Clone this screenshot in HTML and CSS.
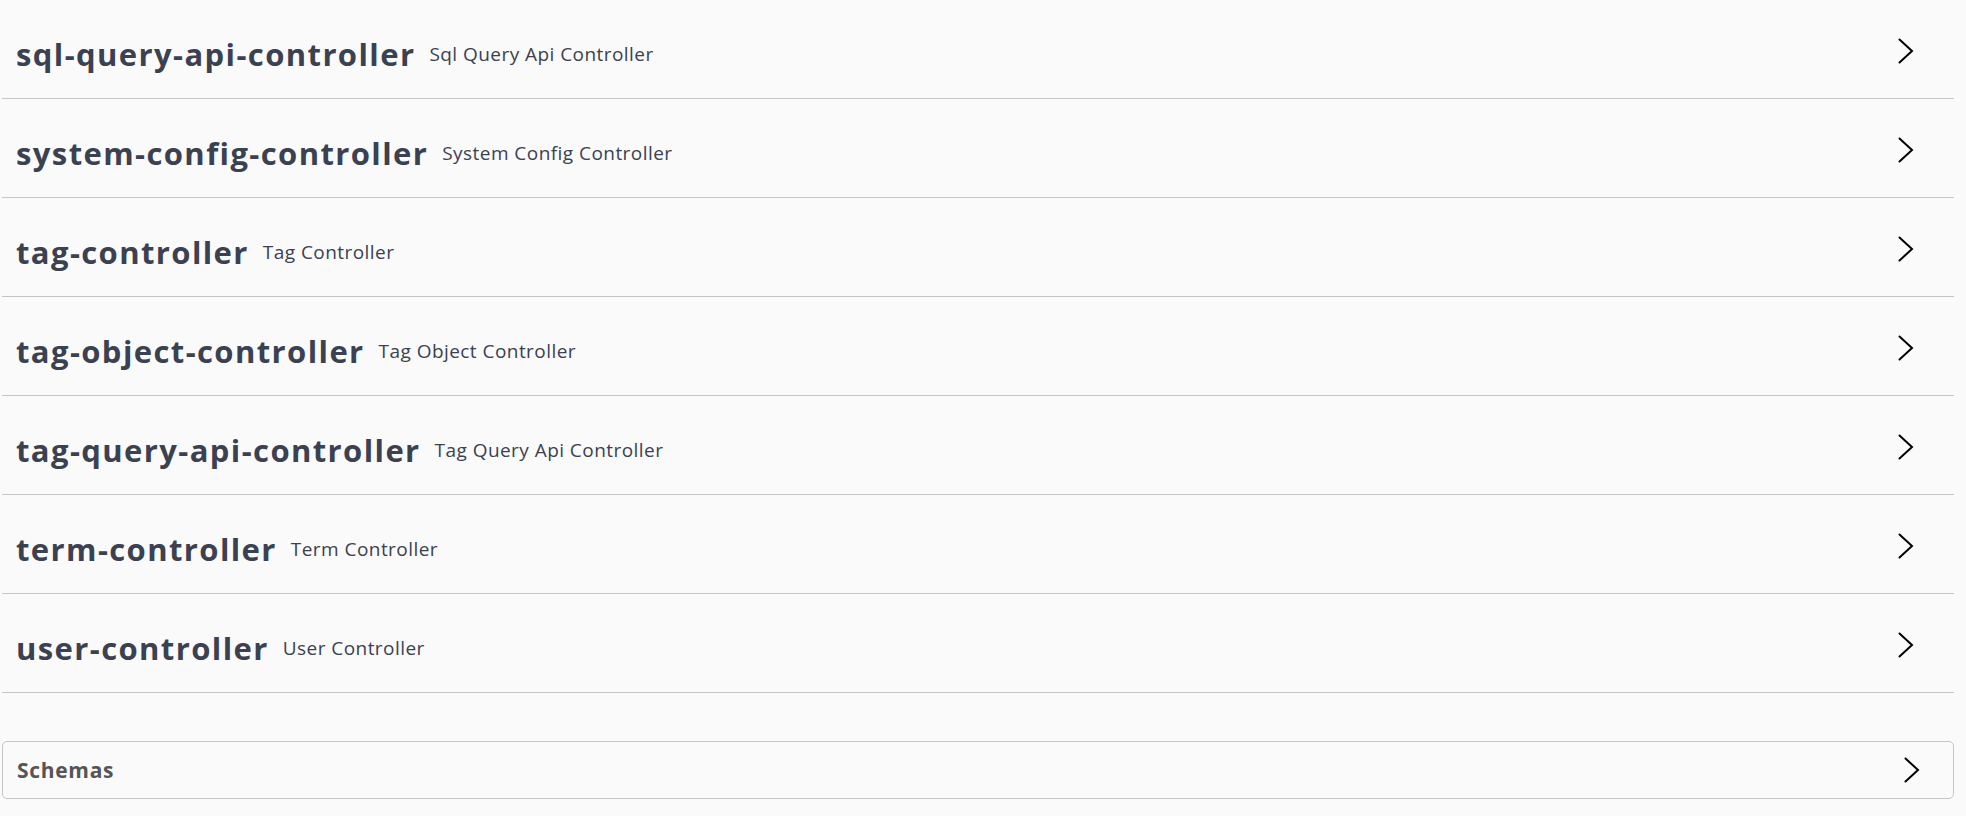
FILE: index.html
```html
<!DOCTYPE html>
<html>
<head>
<meta charset="utf-8">
<link rel="stylesheet" href="styles.css">
</head>
<body>
<div class="page">
  <div class="tags">
    <section class="tag"><h3 class="tag-head"><span class="tag-name">sql-query-api-controller</span><small class="tag-desc">Sql Query Api Controller</small><button class="expand"><svg viewBox="0 0 16 26" width="16" height="26"><polyline points="1.5,1.5 14,13 1.5,24.5"/></svg></button></h3></section>
    <section class="tag"><h3 class="tag-head"><span class="tag-name">system-config-controller</span><small class="tag-desc">System Config Controller</small><button class="expand"><svg viewBox="0 0 16 26" width="16" height="26"><polyline points="1.5,1.5 14,13 1.5,24.5"/></svg></button></h3></section>
    <section class="tag"><h3 class="tag-head"><span class="tag-name">tag-controller</span><small class="tag-desc">Tag Controller</small><button class="expand"><svg viewBox="0 0 16 26" width="16" height="26"><polyline points="1.5,1.5 14,13 1.5,24.5"/></svg></button></h3></section>
    <section class="tag"><h3 class="tag-head"><span class="tag-name">tag-object-controller</span><small class="tag-desc">Tag Object Controller</small><button class="expand"><svg viewBox="0 0 16 26" width="16" height="26"><polyline points="1.5,1.5 14,13 1.5,24.5"/></svg></button></h3></section>
    <section class="tag"><h3 class="tag-head"><span class="tag-name">tag-query-api-controller</span><small class="tag-desc">Tag Query Api Controller</small><button class="expand"><svg viewBox="0 0 16 26" width="16" height="26"><polyline points="1.5,1.5 14,13 1.5,24.5"/></svg></button></h3></section>
    <section class="tag"><h3 class="tag-head"><span class="tag-name">term-controller</span><small class="tag-desc">Term Controller</small><button class="expand"><svg viewBox="0 0 16 26" width="16" height="26"><polyline points="1.5,1.5 14,13 1.5,24.5"/></svg></button></h3></section>
    <section class="tag"><h3 class="tag-head"><span class="tag-name">user-controller</span><small class="tag-desc">User Controller</small><button class="expand"><svg viewBox="0 0 16 26" width="16" height="26"><polyline points="1.5,1.5 14,13 1.5,24.5"/></svg></button></h3></section>
  </div>
  <section class="models">
    <h4 class="models-head"><span>Schemas</span><svg viewBox="0 0 16 26" width="16" height="26"><polyline points="1.5,1.5 14,13 1.5,24.5"/></svg></h4>
  </section>
</div>
</body>
</html>
```
FILE: styles.css
```css
html, body {
  margin: 0;
  padding: 0;
  background: #fafafa;
}
body {
  font-family: "Open Sans", "Noto Sans", sans-serif;
  color: #3b4151;
}
.page {
  margin: 0 12px 0 2px;
}
.tags {
  display: flex;
  flex-direction: column;
}
.tag-head {
  display: flex;
  align-items: center;
  height: 99px;
  margin: 0;
  padding: 10px 0 0 14px;
  box-sizing: border-box;
  border-bottom: 1px solid #c4c5c9;
}
.tag-name {
  font-size: 31px;
  font-weight: 700;
  letter-spacing: 1.4px;
  color: #3b4151;
}
.tag-desc {
  flex: 1;
  font-size: 19px;
  font-weight: 400;
  letter-spacing: 0.45px;
  padding: 0 12px 0 14px;
  color: #3b4151;
}
.expand {
  border: none;
  background: none;
  padding: 0;
  margin: -6px 40px 0 0;
  display: flex;
}
svg polyline {
  fill: none;
  stroke: #000;
  stroke-width: 2;
  stroke-linecap: round;
  stroke-linejoin: miter;
}
.models {
  margin-top: 48px;
  border: 1px solid #c4c5c9;
  border-radius: 5px;
}
.models-head {
  display: flex;
  align-items: center;
  justify-content: space-between;
  height: 56px;
  margin: 0;
  padding: 0 33px 0 14px;
  font-size: 21px;
  font-weight: 700;
  letter-spacing: 0.7px;
  color: #555555;
}
```
